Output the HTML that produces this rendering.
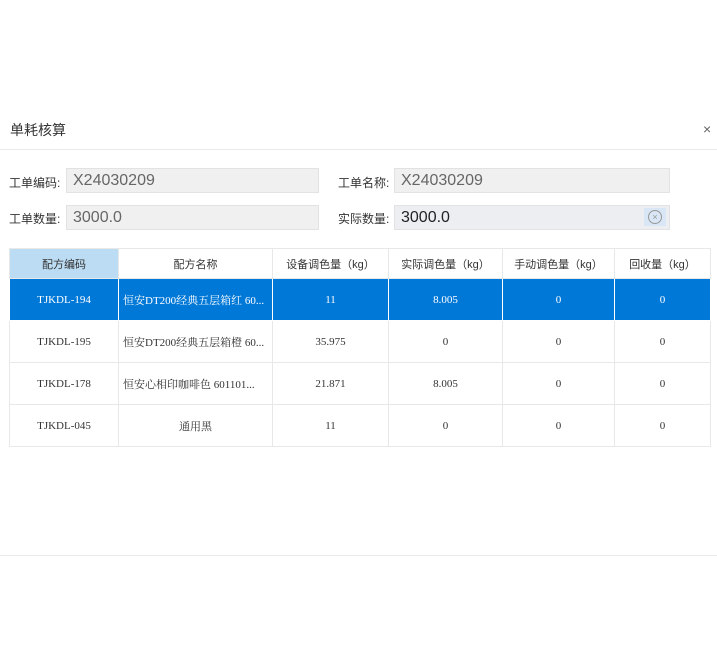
<html><head><style>
body{margin:0;width:717px;height:667px;background:#fff;font-family:"Liberation Sans","Noto Sans CJK SC",sans-serif;position:relative;overflow:hidden}
.a{position:absolute}
.lbl{font-size:12px;color:#333}
.inp{position:absolute;background:#f0f0f0;border:1px solid #e2e2e2;box-sizing:border-box;height:25px;font-size:16px;color:#666;padding-left:6px;line-height:23px}
table{position:absolute;left:9px;top:248px;border-collapse:collapse;font-size:11px;color:#333;font-family:"Liberation Serif","Noto Serif CJK SC",serif}
td{border:1px solid #e8e8e8;text-align:center;padding:0}
tr.h td{height:30px;font-family:"Liberation Sans","Noto Sans CJK SC",sans-serif}
tr.r td{height:42px}
tr.s td{background:#0078d7;color:#fff;border-color:#fff}
.l{text-align:left;padding-left:4px;white-space:nowrap;overflow:hidden}
</style></head><body>
<div class="a" style="left:10px;top:120px;font-size:14px;color:#333">单耗核算</div>
<div class="a" style="left:703px;top:121px;font-size:14px;color:#666">×</div>
<div class="a" style="left:0;top:149px;width:717px;height:1px;background:#eaeaea"></div>
<div class="a lbl" style="left:9px;top:174px">工单编码:</div>
<div class="inp" style="left:66px;top:168px;width:253px">X24030209</div>
<div class="a lbl" style="left:338px;top:174px">工单名称:</div>
<div class="inp" style="left:394px;top:168px;width:276px">X24030209</div>
<div class="a lbl" style="left:9px;top:210px">工单数量:</div>
<div class="inp" style="left:66px;top:205px;width:253px">3000.0</div>
<div class="a lbl" style="left:338px;top:210px">实际数量:</div>
<div class="inp" style="left:394px;top:205px;width:276px;background:#eceef2;color:#222">3000.0</div>
<div class="a" style="left:644px;top:208px;width:22px;height:18px;background:#d8e6f5"></div>
<div class="a" style="left:648px;top:210px;width:12px;height:12px;border:1px solid #999;border-radius:50%;font-size:9px;line-height:12px;text-align:center;color:#999">×</div>
<table>
<tr class="h"><td style="width:108px;background:#bcdcf4">配方编码</td><td style="width:153px">配方名称</td><td style="width:115px">设备调色量（kg）</td><td style="width:113px">实际调色量（kg）</td><td style="width:111px">手动调色量（kg）</td><td style="width:95px">回收量（kg）</td></tr>
<tr class="r s"><td>TJKDL-194</td><td class="l">恒安DT200经典五层箱红 60...</td><td>11</td><td>8.005</td><td>0</td><td>0</td></tr>
<tr class="r"><td>TJKDL-195</td><td class="l">恒安DT200经典五层箱橙 60...</td><td>35.975</td><td>0</td><td>0</td><td>0</td></tr>
<tr class="r"><td>TJKDL-178</td><td class="l">恒安心相印咖啡色 601101...</td><td>21.871</td><td>8.005</td><td>0</td><td>0</td></tr>
<tr class="r"><td>TJKDL-045</td><td>通用黑</td><td>11</td><td>0</td><td>0</td><td>0</td></tr>
</table>
<div class="a" style="left:0;top:555px;width:717px;height:1px;background:#eaeaea"></div>
</body></html>
